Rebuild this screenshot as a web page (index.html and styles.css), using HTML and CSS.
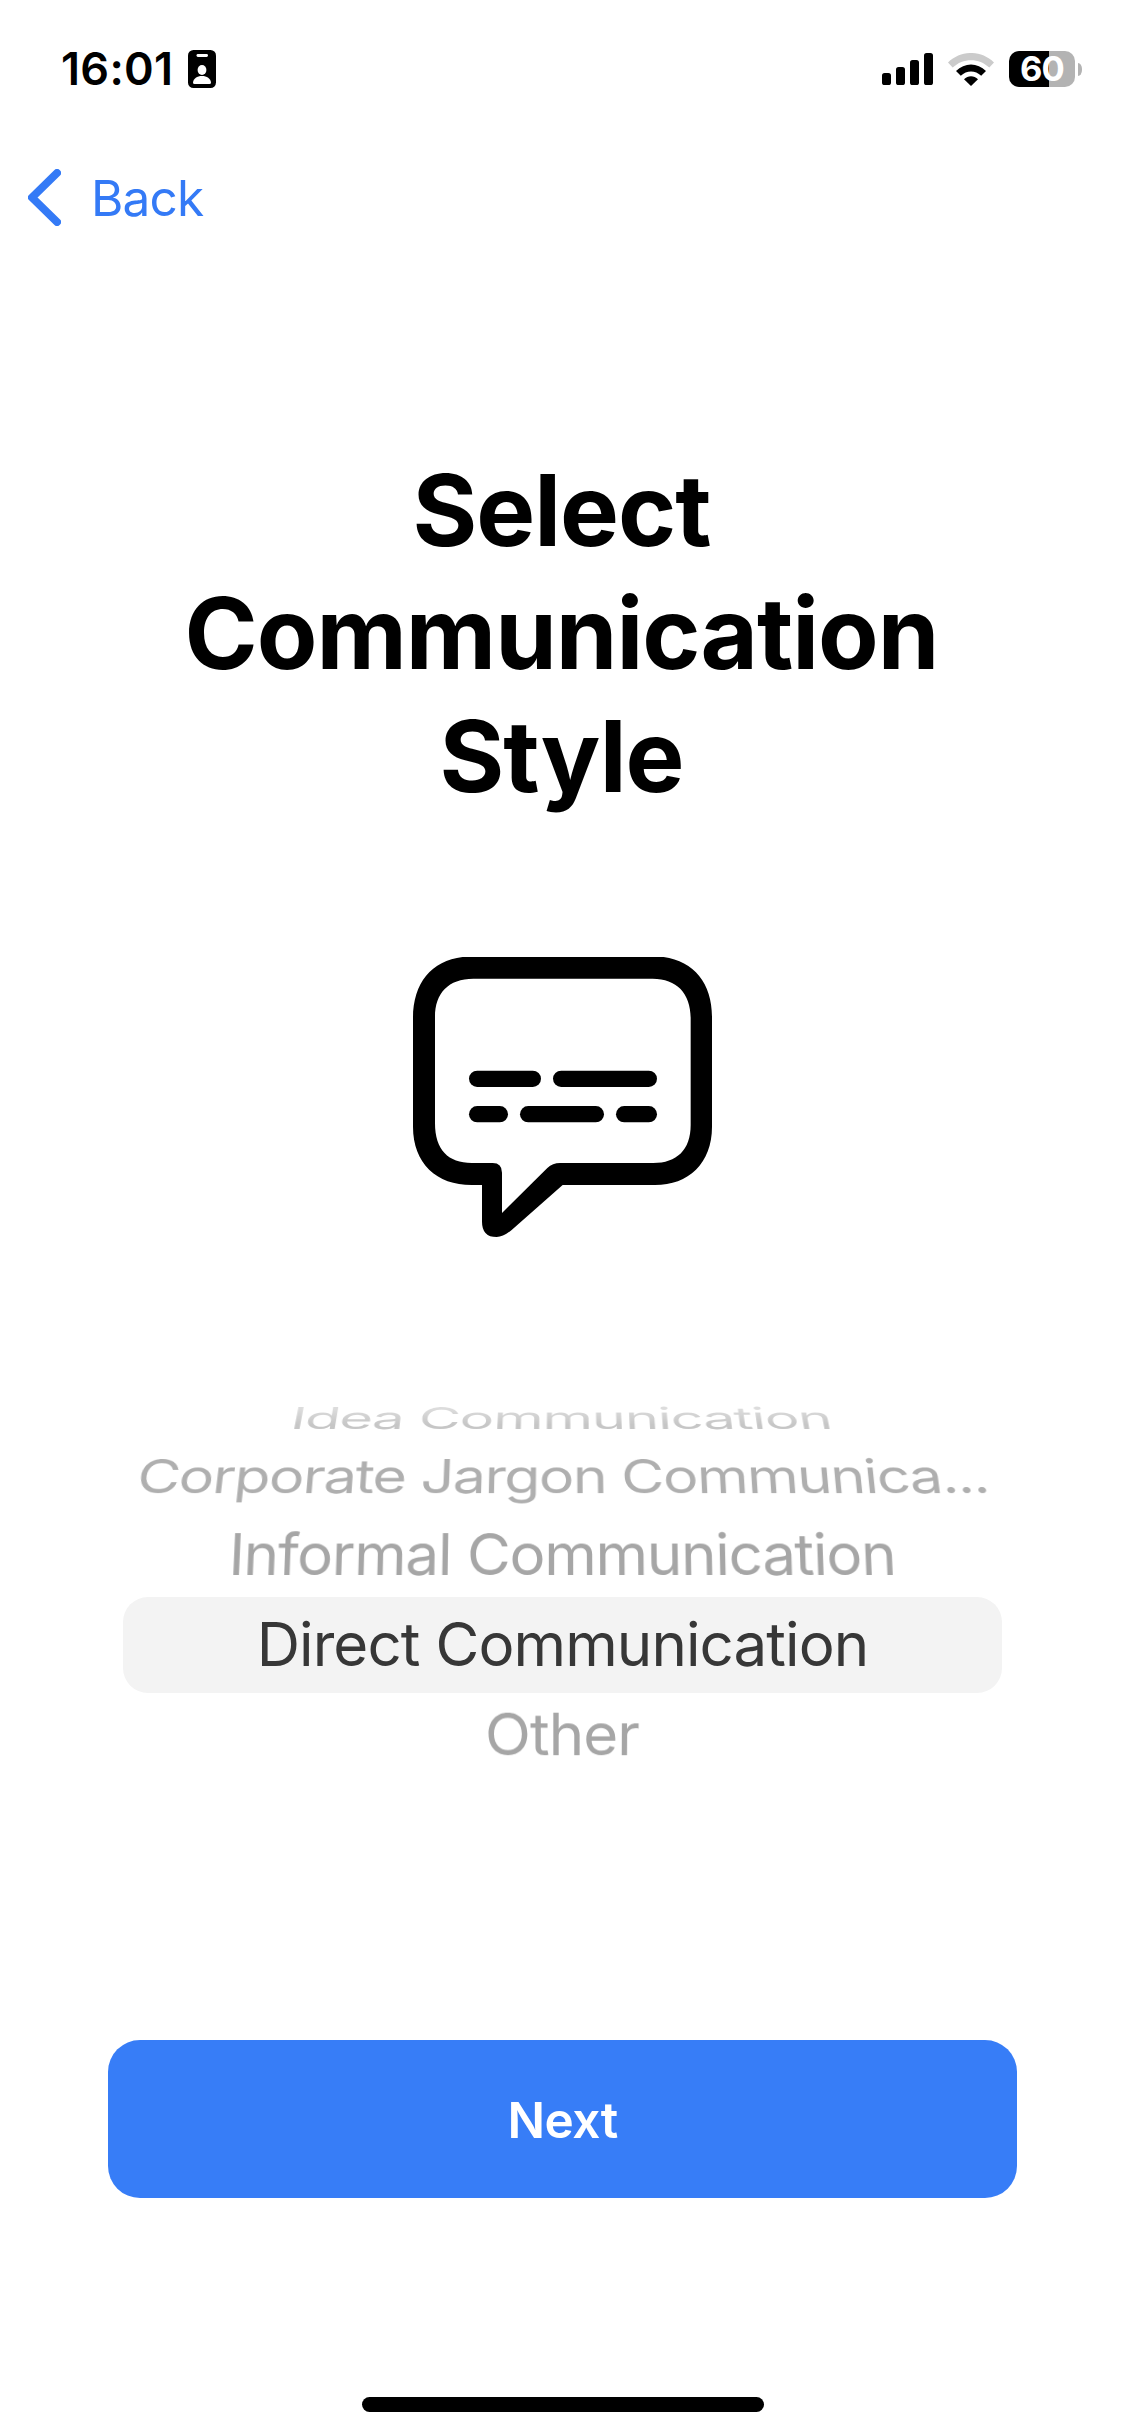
FILE: index.html
```html
<!DOCTYPE html>
<html lang="en">
<head>
<meta charset="utf-8">
<title>Select Communication Style</title>
<link rel="stylesheet" href="styles.css">
</head>
<body>
<div class="screen">
  <header class="status">
    <div class="status-left">
      <span class="time">16:01</span>
      <svg class="badge" viewBox="0 0 28 38" width="28" height="38">
        <rect width="28" height="38" rx="5.5"/>
        <rect x="8.5" y="4" width="11.5" height="3" rx="1.4" fill="#fff"/>
        <ellipse cx="14" cy="20" rx="4.4" ry="5" fill="#fff"/>
        <path d="M5 32.5C5.5 28.500 9 26 14 26S22.500 28.500 23 32.500Q23 34 21.500 34H6.500Q5 34 5 32.500Z" fill="#fff"/>
      </svg>
    </div>
    <div class="status-right">
      <svg class="signal" viewBox="0 0 51 32" width="51" height="32">
        <rect x="0" y="20" width="9" height="12" rx="2.600"/>
        <rect x="14" y="14" width="9" height="18" rx="2.600"/>
        <rect x="28" y="7" width="9" height="25" rx="2.600"/>
        <rect x="42" y="0" width="9" height="32" rx="2.600"/>
      </svg>
      <svg class="wifi" viewBox="0 0 46 33" width="46" height="33">
        <path d="M0 9.500C13-3.200 33-3.200 46 9.500L41.300 14.500C31 4.700 15 4.700 4.700 14.500Z" fill="#cbcbcb"/>
        <path d="M8 18C16.500 9.200 29.500 9.200 38 18L33.200 22.800C27.300 17 18.700 17 12.800 22.800Z"/>
        <path d="M16 26.300C20 22.200 26 22.200 30 26.300L23 33Z"/>
      </svg>
      <div class="battery">
        <div class="battery-body">60</div>
        <div class="battery-nub"></div>
      </div>
    </div>
  </header>

  <nav class="nav">
    <svg viewBox="0 0 33 57" width="33" height="57">
      <path d="M29 4L4 28.500L29 53" fill="none" stroke="#347af6" stroke-width="8" stroke-linecap="round" stroke-linejoin="round"/>
    </svg>
    <span class="back">Back</span>
  </nav>

  <main class="content">
    <h1 class="title">Select<br>Communication<br>Style</h1>

    <svg class="bubble" viewBox="69 81 897 840" width="299" height="280">
      <path fill-rule="evenodd" d="M69 265C69 147 137 79 250 79H790C900 79 966 150 966 260V590C966 700 895 765 795 765H518L365 900Q340 921 320 921Q276 921 276 875V765H245C140 765 69 700 69 590Z
        M135 260C135 190 175 146 250 146H788C860 146 902 190 902 265V585C902 660 860 699 790 699H510Q488 699 472 714L336 849V728Q336 699 308 699H245C175 699 135 660 135 580Z"/>
      <rect x="237" y="422" width="216" height="49" rx="24.500"/>
      <rect x="489" y="422" width="312" height="49" rx="24.500"/>
      <rect x="237" y="528" width="117" height="49" rx="24.500"/>
      <rect x="390" y="528" width="252" height="49" rx="24.500"/>
      <rect x="678" y="528" width="123" height="49" rx="24.500"/>
    </svg>

    <div class="picker">
      <div class="row row-idea"><span>Idea Communication</span></div>
      <div class="row row-corporate"><span>Corporate Jargon Communica...</span></div>
      <div class="row row-informal"><span>Informal Communication</span></div>
      <div class="row row-selected"><span>Direct Communication</span></div>
      <div class="row row-other"><span>Other</span></div>
    </div>

    <button class="next">Next</button>
  </main>

  <div class="home"></div>
</div>
</body>
</html>
```
FILE: styles.css
```css
* { box-sizing: border-box; }
body { margin: 0; background: #fff; }
.screen {
  width: 1125px;
  height: 2436px;
  display: flex;
  flex-direction: column;
  align-items: center;
  overflow: hidden;
  font-family: Inter, "Liberation Sans", sans-serif;
  color: #000;
}

.status {
  width: 100%;
  height: 138px;
  padding: 0 43px 0 61px;
  display: flex;
  align-items: center;
  justify-content: space-between;
}
.status-left { display: flex; align-items: center; gap: 16px; }
.time { width: 111px; padding-bottom: 1px; font-size: 45px; font-weight: 600; letter-spacing: 0.3px; white-space: nowrap; }
.status-right { display: flex; align-items: center; }
.wifi { margin-left: 15px; }
.battery { margin-left: 15px; display: flex; align-items: center; gap: 3px; }
.battery-body {
  width: 66px;
  height: 36px;
  border-radius: 10px;
  background: linear-gradient(to right, #000 40px, #b3b3b3 40px);
  color: #fff;
  font-size: 34.5px;
  line-height: 35px;
  font-weight: 650;
  letter-spacing: -0.8px;
  text-align: center;
}
.battery-nub { width: 4px; height: 13px; border-radius: 0 4px 4px 0 / 0 6px 6px 0; background: #b3b3b3; }

.nav {
  width: 100%;
  height: 119px;
  padding-left: 28px;
  display: flex;
  align-items: center;
  gap: 30px;
}
.back { color: #347af6; font-size: 49.5px; letter-spacing: -0.8px; }

.content { display: flex; flex-direction: column; align-items: center; }
.title {
  margin: 192px 0 139px;
  padding-right: 2px;
  font-size: 99px;
  line-height: 123px;
  font-weight: 700;
  letter-spacing: -1px;
  text-align: center;
}
.bubble { display: block; }

.picker {
  width: 879px;
  margin-top: 159px;
  display: flex;
  flex-direction: column;
  font-size: 60px;
  letter-spacing: -1.5px;
  color: #a6a6a6;
}
.row { display: flex; align-items: center; justify-content: center; white-space: nowrap; }
.row span { display: block; line-height: 84px; }
.row-idea { height: 44px; padding-right: 3px; letter-spacing: -1.2px; }
.row-idea span {
  background: linear-gradient(#dcdcdc 28%, #c6c6c6 66%);
  -webkit-background-clip: text;
  background-clip: text;
  color: transparent;
  transform: perspective(2370px) rotateX(60deg) scaleX(0.96);
}
.row-corporate { height: 72px; color: #afafaf; }
.row-corporate span { transform: perspective(2370px) rotateX(39deg) scaleX(0.982); }
.row-informal { height: 85px; padding-bottom: 2px; letter-spacing: -1.25px; }
.row-informal span { transform: perspective(2370px) rotateX(18deg); }
.row-selected { height: 96px; padding-bottom: 2px; border-radius: 25px; background: #f3f3f3; color: #373737; letter-spacing: -0.9px; }
.row-other { height: 81px; letter-spacing: -0.9px; }
.row-other span { transform: perspective(2370px) rotateX(-15deg); }

.next {
  width: 909px;
  height: 158px;
  margin-top: 266px;
  padding: 2px 0 0;
  border: 0;
  border-radius: 32px;
  background: #377df7;
  color: #fff;
  font: 560 49.5px/156px Inter, "Liberation Sans", sans-serif;
  letter-spacing: -0.5px;
}

.home { width: 402px; height: 15px; margin-top: 199px; border-radius: 8px; background: #000; }
```
